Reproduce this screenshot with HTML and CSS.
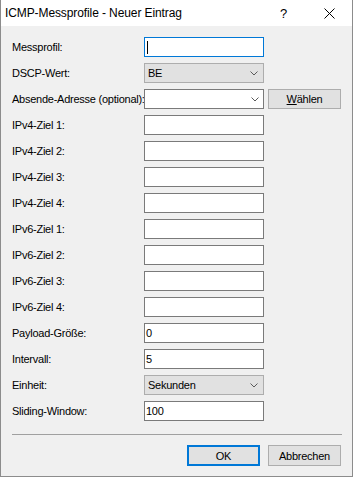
FILE: index.html
```html
<!DOCTYPE html>
<html lang="de">
<head>
<meta charset="utf-8">
<title>ICMP-Messprofile - Neuer Eintrag</title>
<link rel="stylesheet" href="styles.css">
</head>
<body>
<div class="window">
  <div class="titlebar">
    <span class="title">ICMP-Messprofile - Neuer Eintrag</span>
    <span class="help">?</span>
    <span class="close"><svg width="11" height="11" viewBox="0 0 11 11"><path d="M0.5 0.5 L10.5 10.5 M10.5 0.5 L0.5 10.5" stroke="#000" stroke-width="1" fill="none"/></svg></span>
  </div>
  <div class="content">
    <div class="form">
      <div class="row"><span class="label">Messprofil:</span><span class="field input focused"><span class="caret"></span></span></div>
      <div class="row"><span class="label">DSCP-Wert:</span><span class="field select"><span class="val">BE</span><svg class="chev" width="8" height="5" viewBox="0 0 8 5"><path d="M0.5 0.5 L4 4 L7.5 0.5" stroke="#5a5a5a" fill="none"/></svg></span></div>
      <div class="row"><span class="label">Absende-Adresse (optional):</span><span class="field input combo"><svg class="chev" width="8" height="5" viewBox="0 0 8 5"><path d="M0.5 0.5 L4 4 L7.5 0.5" stroke="#5a5a5a" fill="none"/></svg></span><span class="btn side"><u>W</u>ählen</span></div>
      <div class="row"><span class="label">IPv4-Ziel 1:</span><span class="field input"></span></div>
      <div class="row"><span class="label">IPv4-Ziel 2:</span><span class="field input"></span></div>
      <div class="row"><span class="label">IPv4-Ziel 3:</span><span class="field input"></span></div>
      <div class="row"><span class="label">IPv4-Ziel 4:</span><span class="field input"></span></div>
      <div class="row"><span class="label">IPv6-Ziel 1:</span><span class="field input"></span></div>
      <div class="row"><span class="label">IPv6-Ziel 2:</span><span class="field input"></span></div>
      <div class="row"><span class="label">IPv6-Ziel 3:</span><span class="field input"></span></div>
      <div class="row"><span class="label">IPv6-Ziel 4:</span><span class="field input"></span></div>
      <div class="row"><span class="label">Payload-Größe:</span><span class="field input"><span class="text">0</span></span></div>
      <div class="row"><span class="label">Intervall:</span><span class="field input"><span class="text">5</span></span></div>
      <div class="row"><span class="label">Einheit:</span><span class="field select"><span class="val">Sekunden</span><svg class="chev" width="8" height="5" viewBox="0 0 8 5"><path d="M0.5 0.5 L4 4 L7.5 0.5" stroke="#5a5a5a" fill="none"/></svg></span></div>
      <div class="row"><span class="label">Sliding-Window:</span><span class="field input"><span class="text">100</span></span></div>
    </div>
    <div class="sep"></div>
    <div class="buttons">
      <span class="btn default">OK</span>
      <span class="btn">Abbrechen</span>
    </div>
  </div>
</div>
</body>
</html>
```
FILE: styles.css
```css
* { box-sizing: border-box; }
html, body { margin: 0; padding: 0; background: #f0f0f0; }
.window {
  width: 353px;
  height: 477px;
  border: 1px solid #8c8c8c;
  border-top: none;
  background: #f0f0f0;
  font-family: "Liberation Sans", Arial, sans-serif;
  font-size: 11px;
  letter-spacing: -0.25px;
  color: #000;
  display: flex;
  flex-direction: column;
}
.titlebar {
  height: 26px;
  background: #fff;
  display: flex;
  align-items: center;
  font-size: 12px;
  letter-spacing: -0.1px;
}
.title { margin-left: 4px; flex: 1; }
.help { width: 10px; margin-right: 34px; font-size: 13px; }
.close { width: 11px; height: 11px; margin-right: 17px; display: flex; }
.content {
  padding: 11px 11px 0 11px;
  display: flex;
  flex-direction: column;
}
.form { display: flex; flex-direction: column; gap: 6px; }
.row { display: flex; align-items: center; height: 20px; }
.label { width: 132px; white-space: nowrap; }
.field {
  width: 120px;
  height: 20px;
  display: flex;
  align-items: center;
}
.input { background: #fff; border: 1px solid #7a7a7a; }
.input.focused { border-color: #0078d7; }
.select { background: #e1e1e1; border: 1px solid #adadad; }
.caret { width: 1px; height: 13px; background: #000; margin-left: 2px; }
.text { margin-left: 1px; }
.val { margin-left: 3px; flex: 1; }
.combo { justify-content: flex-end; }
.chev { margin-right: 4px; }
.select .chev { margin-right: 5px; }
.btn {
  width: 73px;
  height: 20px;
  background: #e1e1e1;
  border: 1px solid #adadad;
  display: flex;
  align-items: center;
  justify-content: center;
}
.btn.side { margin-left: 4px; }
.btn.default { border: 2px solid #0078d7; }
.sep { height: 1px; background: #a0a0a0; margin-top: 13px; width: 330px; }
.buttons {
  display: flex;
  justify-content: flex-end;
  gap: 8px;
  margin-top: 10px;
}
.buttons .btn { height: 21px; }
```
